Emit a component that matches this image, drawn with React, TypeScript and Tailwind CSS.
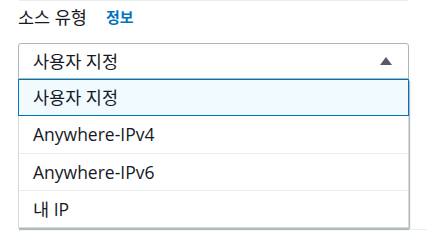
import { useState } from 'react';

const options = ['사용자 지정', 'Anywhere-IPv4', 'Anywhere-IPv6', '내 IP'];

export default function App() {
  const [selected, setSelected] = useState(0);

  return (
    <div
      className="w-[427px] h-[248px] bg-white overflow-hidden relative text-[#16191f]"
      style={{ fontFamily: '"Open Sans", "Noto Sans CJK KR", sans-serif' }}
    >
      <div className="ml-[19px] w-[389px] h-px bg-[#eaeded]" />
      <div className="ml-[18px] mt-[4px] flex items-center h-[24px]">
        <span className="text-[17.5px]">소스 유형</span>
        <span className="ml-[19px] text-[15px] font-semibold text-[#0073bb]">정보</span>
      </div>
      {/* select trigger */}
      <div className="ml-[18px] mt-[14px] w-[391px] h-[36px] border border-[#aab7b8] rounded-t-[3px] flex items-center pl-[14px] pr-[16px]">
        <span className="text-[17.5px] flex-1">{options[selected]}</span>
        <svg width="12" height="8" viewBox="0 0 12 8">
          <path d="M6 0 L12 8 L0 8 Z" fill="#545b64" />
        </svg>
      </div>
      {/* dropdown */}
      <div className="ml-[18px] w-[391px] bg-white border-x border-b border-[#d5dbdb] shadow-[1px_2px_1px_rgba(0,28,36,0.3)]">
        {options.map((o, i) => (
          <div
            key={o}
            onClick={() => setSelected(i)}
            className={`h-[37px] flex items-center pl-[14px] text-[17.5px] ${
              i === 0
                ? 'bg-[#f1faff] border border-[#0073bb] -mx-px'
                : 'border-t border-[#eaeded]'
            } ${i === 1 ? 'border-t-0' : ''}`}
          >
            {o}
          </div>
        ))}
      </div>
      <div className="absolute left-[409px] top-[229px] w-[18px] h-px bg-[#eaeded]" />
    </div>
  );
}
